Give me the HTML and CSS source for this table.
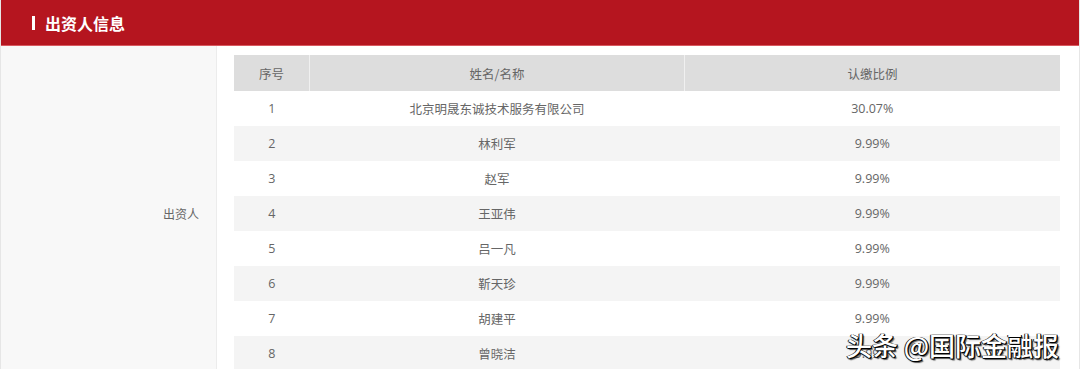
FILE: index.html
```html
<!DOCTYPE html>
<html lang="zh">
<head>
<meta charset="utf-8">
<link rel="stylesheet" href="styles.css">
</head>
<body>
<div class="panel">
  <div class="panel-head"><span class="head-bar"></span><span class="head-title">出资人信息</span></div>
  <div class="panel-body">
    <div class="label-cell">出资人</div>
    <div class="table-cell">
      <table class="grid">
        <thead>
          <tr><th class="c-no">序号</th><th class="c-name">姓名/名称</th><th class="c-pct">认缴比例</th></tr>
        </thead>
        <tbody>
          <tr><td>1</td><td>北京明晟东诚技术服务有限公司</td><td>30.07%</td></tr>
          <tr><td>2</td><td>林利军</td><td>9.99%</td></tr>
          <tr><td>3</td><td>赵军</td><td>9.99%</td></tr>
          <tr><td>4</td><td>王亚伟</td><td>9.99%</td></tr>
          <tr><td>5</td><td>吕一凡</td><td>9.99%</td></tr>
          <tr><td>6</td><td>靳天珍</td><td>9.99%</td></tr>
          <tr><td>7</td><td>胡建平</td><td>9.99%</td></tr>
          <tr><td>8</td><td>曾晓洁</td><td>9.99%</td></tr>
        </tbody>
      </table>
    </div>
  </div>
  <div class="watermark">头条 @国际金融报</div>
</div>
</body>
</html>
```
FILE: styles.css
```css
html, body {
  margin: 0;
  padding: 0;
  background: #ffffff;
}
body {
  font-family: "Open Sans", "Noto Sans CJK SC", sans-serif;
  color: #666666;
  overflow: hidden;
}
.panel {
  position: relative;
  width: 1078px;
  border-left: 1px solid #e6e6e6;
  border-right: 1px solid #e6e6e6;
}
.panel-head {
  height: 46px;
  background: #b5151f;
  display: flex;
  align-items: center;
  padding-left: 31px;
  box-sizing: border-box;
  border-bottom: 1px solid #d9585f;
}
.head-bar {
  width: 3px;
  height: 14px;
  background: #ffffff;
  margin-right: 10px;
}
.head-title {
  color: #ffffff;
  font-family: "Noto Sans CJK SC", sans-serif;
  font-weight: 700;
  font-size: 16px;
  line-height: 20px;
}
.panel-body {
  display: flex;
}
.label-cell {
  width: 216px;
  flex: none;
  box-sizing: border-box;
  background: #f8f8f8;
  border-right: 1px solid #ececec;
  display: flex;
  align-items: center;
  justify-content: flex-end;
  padding-right: 17px;
  font-family: "Noto Sans CJK SC", sans-serif;
  font-size: 12px;
}
.table-cell {
  padding: 9px 17px 9px 17px;
}
.grid {
  width: 826px;
  border-collapse: collapse;
  table-layout: fixed;
  font-size: 12.5px;
}
.grid th {
  background: #dddddd;
  font-weight: 400;
  height: 36px;
  padding: 0;
  border-left: 1px solid #f0f0f0;
  font-family: "Noto Sans CJK SC", sans-serif;
}
.grid th:first-child {
  border-left: none;
}
.c-no { width: 75px; }
.c-name { width: 374px; }
.grid td {
  height: 35px;
  padding: 0;
  text-align: center;
  font-family: "Open Sans", "Noto Sans CJK SC", sans-serif;
}
.grid tbody tr:nth-child(even) td {
  background: #f4f4f4;
}
.watermark {
  position: absolute;
  left: 845px;
  top: 326px;
  font-family: "Noto Sans CJK SC", sans-serif;
  font-size: 26px;
  font-weight: 500;
  color: #ffffff;
  text-shadow: 1px 1px 0 #000, -1px 0 0 #222, 0 1px 1px #000, 1px 0 0 #000, 2px 2px 1px rgba(0,0,0,0.6);
  white-space: nowrap;
}
```
